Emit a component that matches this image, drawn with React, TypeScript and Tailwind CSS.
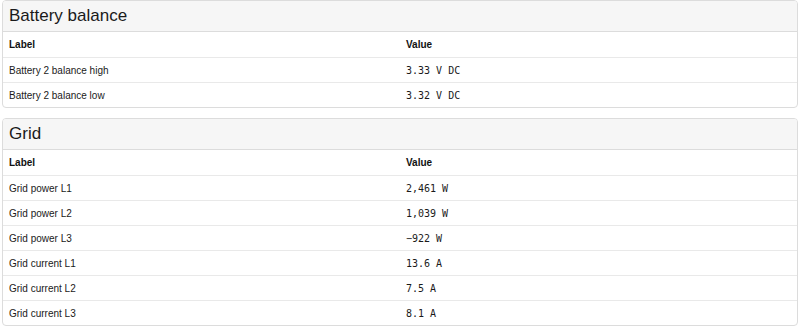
const sections = [
  {
    title: "Battery balance",
    rows: [
      ["Battery 2 balance high", "3.33 V DC"],
      ["Battery 2 balance low", "3.32 V DC"],
    ],
  },
  {
    title: "Grid",
    rows: [
      ["Grid power L1", "2,461 W"],
      ["Grid power L2", "1,039 W"],
      ["Grid power L3", "−922 W"],
      ["Grid current L1", "13.6 A"],
      ["Grid current L2", "7.5 A"],
      ["Grid current L3", "8.1 A"],
    ],
  },
];

function Section({ title, rows }: { title: string; rows: string[][] }) {
  return (
    <div className="border border-[#dcdcdc] rounded-[4px] overflow-hidden bg-white">
      <div className="h-[31px] bg-[#f6f6f6] border-b border-[#dcdcdc] px-[6px] flex items-center text-[17px] text-[#1a1a1a]">
        {title}
      </div>
      <div className="grid grid-cols-2 h-[25px] items-center text-[10px] font-bold text-[#111]">
        <div className="px-[6px]">Label</div>
        <div className="px-[6px]">Value</div>
      </div>
      {rows.map(([label, value]) => (
        <div key={label} className="grid grid-cols-2 h-[25px] items-center border-t border-[#e9e9e9] text-[10px] text-[#1a1a1a]">
          <div className="px-[6px]">{label}</div>
          <div className="px-[6px] font-['DejaVu_Sans_Mono',monospace]">{value}</div>
        </div>
      ))}
    </div>
  );
}

export default function App() {
  return (
    <div className="w-[800px] h-[327px] bg-white px-[2px] flex flex-col gap-[10px] font-['Liberation_Sans',Arial,sans-serif]">
      {sections.map((s) => (
        <Section key={s.title} title={s.title} rows={s.rows} />
      ))}
    </div>
  );
}
